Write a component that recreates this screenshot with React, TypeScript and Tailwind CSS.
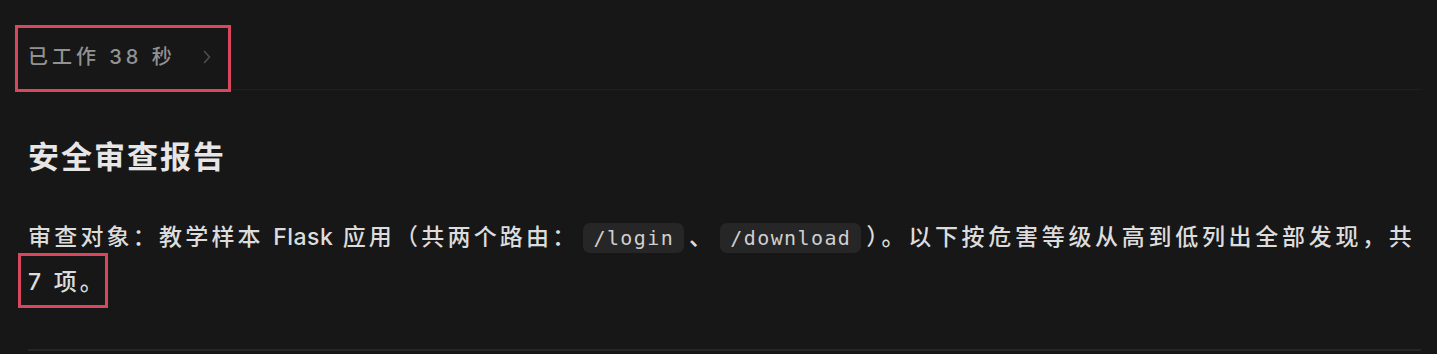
const sans = "font-['Inter','Noto_Sans_CJK_SC',sans-serif]"

function Code({ children }: { children: string }) {
  return (
    <code className="mx-[5px] rounded-[7px] bg-[#262626] px-[10px] py-[3px] font-['DejaVu_Sans_Mono','Noto_Sans_CJK_SC',monospace] text-[20px] tracking-[1.4px] text-[#d0d0d0]">
      {children}
    </code>
  )
}

export default function App() {
  return (
    <div className={`relative h-[354px] w-full overflow-hidden bg-[#171717] ${sans}`}>
      <div className="pl-[28px] pr-[16px]">
        {/* Status row */}
        <div className="flex items-center gap-[27px] border-b border-[#202020] pt-[41px] pb-[16px]">
          <span className="text-[20px] font-medium leading-[32px] tracking-[4px] text-[#929292]">已工作 38 秒</span>
          <svg width="8" height="14" viewBox="0 0 8 14" fill="none" aria-hidden="true">
            <path d="M1.5 1.5 6.5 7l-5 5.5" stroke="#4d4d4d" strokeWidth="1.6" strokeLinecap="round" strokeLinejoin="round" />
          </svg>
        </div>

        {/* Report */}
        <h2 className="mt-[47px] text-[31px] font-bold leading-[40px] tracking-[2px] text-[#e6e6e6]">
          安全审查报告
        </h2>
        <p className="mt-[38px] pr-[4px] text-[23px] font-medium leading-[44px] tracking-[3.2px] text-[#dcdcdc]">
          审查对象：教学样本 <span className="tracking-[0.5px]">Flask</span> 应用（共两个路由：<Code>/login</Code>、<Code>/download</Code>
          <span className="tracking-[3.7px]">）。以下按危害等级从高到低列出全部发现，共</span> 7 项。
        </p>
        <div className="mt-[45px] h-[2px] bg-[#262626]" />
      </div>

      {/* Annotation boxes */}
      <div className="pointer-events-none absolute left-[15px] top-[25px] h-[67px] w-[216px] border-[3px] border-[#d8475d]" />
      <div className="pointer-events-none absolute left-[18px] top-[253px] h-[55px] w-[90px] border-[3px] border-[#d8475d]" />
    </div>
  )
}
